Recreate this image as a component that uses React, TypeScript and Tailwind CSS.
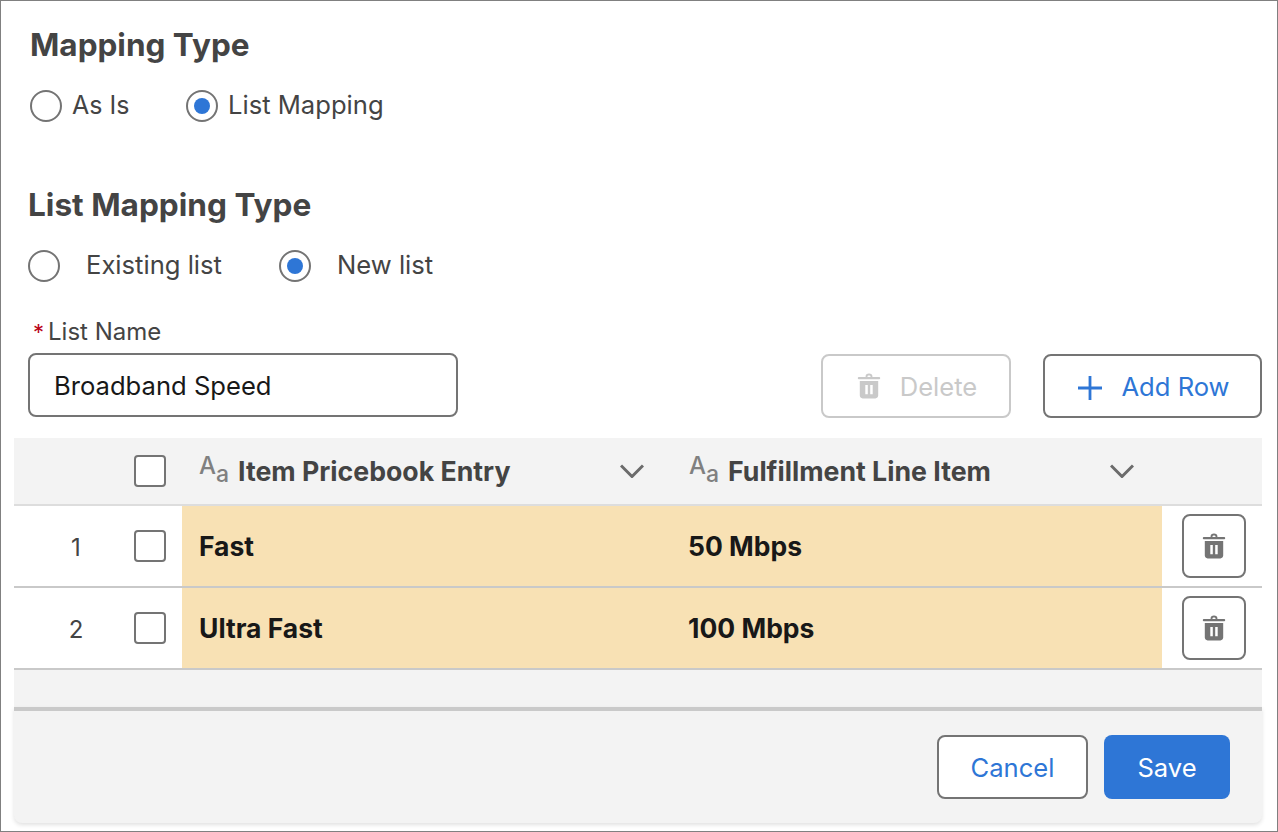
import React from "react";

function Radio({ checked }: { checked?: boolean }) {
  return (
    <span className="flex h-8 w-8 shrink-0 items-center justify-center rounded-full border-2 border-[#747474] bg-white">
      {checked && <span className="h-4 w-4 rounded-full bg-[#2e76d6]" />}
    </span>
  );
}

function Trash({ color, className }: { color: string; className: string }) {
  return (
    <svg viewBox="0 0 24 26" className={className} fill={color}>
      <path d="M8.6 4.2V3.2C8.6 1.6 9.9.6 12 .6s3.4 1 3.4 2.6v1h-1.9v-.9c0-.6-.6-.9-1.5-.9s-1.5.3-1.5.9v.9z" />
      <rect x="0.8" y="4" width="22.4" height="2.2" rx="1" />
      <path fillRule="evenodd" d="M2.8 8h18.4v14.6c0 1.6-1.2 2.8-2.8 2.8H5.6c-1.6 0-2.8-1.2-2.8-2.8zM8.3 12v9.2h2.5V12zM13.2 12v9.2h2.5V12z" />
    </svg>
  );
}

function Chevron() {
  return (
    <svg viewBox="0 0 24 14" className="h-[14px] w-[24px]" fill="none" stroke="#6b6b6b" strokeWidth="3">
      <path d="M1 1.5 12 12.5 23 1.5" />
    </svg>
  );
}

function TextType() {
  return (
    <span className="-ml-px flex w-[39px] shrink-0 items-end leading-none text-[#808080]">
      <span className="mb-[9px] text-[24px] font-medium leading-none">A</span>
      <span className="mb-[1px] text-[23px] font-medium leading-none">a</span>
    </span>
  );
}

function Box() {
  return <span className="block h-8 w-8 rounded-[4px] border-2 border-[#747474] bg-white" />;
}

function Row({ n, a, b }: { n: string; a: string; b: string }) {
  return (
    <div className="flex h-[82px] items-center border-b-2 border-[#c9c9c9]">
      <span className="w-[120px] pl-1 pt-[3px] text-center text-[24px] text-[#444444]">{n}</span>
      <span className="mr-4">
        <Box />
      </span>
      <div className="flex h-full w-[980px] items-center bg-[#f8e1b4] pt-[2px] text-[26.5px] font-bold text-[#181818]">
        <span className="w-[490px] pl-[17px]">{a}</span>
        <span className="pl-[16px]">{b}</span>
      </div>
      <button className="ml-5 flex h-16 w-16 items-center justify-center rounded-lg border-2 border-[#747474] bg-white">
        <Trash color="#747474" className="h-[26px] w-[24px]" />
      </button>
    </div>
  );
}

export default function App() {
  return (
    <div
      className="h-[832px] w-[1278px] overflow-hidden border border-[#808080] bg-white text-[#444444]"
      style={{ fontFamily: "Inter, 'Liberation Sans', sans-serif" }}
    >
      <div className="pl-[29px] pt-[24px]">
        <h2 className="h-10 text-[31.5px] font-bold leading-10">Mapping Type</h2>
      </div>
      <div className="mt-[25px] flex h-8 items-center pl-[29px] text-[25.6px]">
        <Radio />
        <span className="ml-[10px] w-[114px] text-[25px]">As Is</span>
        <Radio checked />
        <span className="ml-[10px] pb-[2px]">List Mapping</span>
      </div>
      <div className="mt-[63px] pl-[27px]">
        <h2 className="h-10 text-[31.6px] font-bold leading-10">List Mapping Type</h2>
      </div>
      <div className="mt-[25px] flex h-8 items-center pl-[27px] text-[25.6px]">
        <Radio />
        <span className="ml-[26px] w-[193px] pb-[2px]">Existing list</span>
        <Radio checked />
        <span className="ml-[26px] pb-[2px]">New list</span>
      </div>
      <div className="mt-[34px] flex h-[32px] items-center pl-[32px] text-[24px]">
        <span className="w-[15px] text-[22px] text-[#ba0517]">*</span>
        <span>List Name</span>
      </div>
      <div className="mt-[5px] flex items-start pl-[27px]">
        <div className="flex h-16 w-[430px] items-center rounded-lg border-2 border-[#747474] pl-[24px] pt-[2px] text-[25.6px] text-[#181818]">
          Broadband Speed
        </div>
        <button className="ml-[363px] mt-px flex h-16 w-[190px] items-center justify-center gap-[19px] rounded-lg border-2 border-[#c9c9c9] pl-[2px] text-[25.6px] text-[#c9c9c9]">
          <Trash color="#c9c9c9" className="h-[26px] w-[24px]" />
          <span className="pt-[2px]">Delete</span>
        </button>
        <button className="ml-8 mt-px flex h-16 w-[219px] items-center justify-center gap-[19px] rounded-lg border-2 border-[#747474] pl-[3px] text-[25.6px] text-[#2e76d6]">
          <svg viewBox="0 0 24 24" className="mt-[3px] h-6 w-6" stroke="#2e76d6" strokeWidth="2.8">
            <path d="M12 0v24M0 12h24" />
          </svg>
          <span className="pt-[2px]">Add Row</span>
        </button>
      </div>

      <div className="ml-[13px] mt-[20px] w-[1248px]">
        <div className="flex h-[68px] items-center border-b-2 border-[#dddddd] bg-[#f3f3f3] text-[26.7px] font-bold">
          <span className="ml-[120px] mr-[34px]">
            <Box />
          </span>
          <div className="flex w-[490px] items-center">
            <TextType />
            <span className="w-[382px]">Item Pricebook Entry</span>
            <Chevron />
          </div>
          <div className="flex w-[490px] items-center">
            <TextType />
            <span className="w-[382px]">Fulfillment Line Item</span>
            <Chevron />
          </div>
        </div>
        <Row n="1" a="Fast" b="50 Mbps" />
        <Row n="2" a="Ultra Fast" b="100 Mbps" />
        <div className="h-[37px] bg-[#f3f3f3]" />
        <div className="flex h-[116px] items-center justify-end rounded-b-lg border-t-4 border-[#c9c9c9] bg-[#f3f3f3] pr-8 shadow-[0_2px_4px_rgba(0,0,0,0.12)]">
          <button className="flex h-16 w-[151px] items-center justify-center rounded-lg border-2 border-[#747474] bg-white pt-[2px] text-[25.6px] text-[#2e76d6]">
            Cancel
          </button>
          <button className="ml-4 flex h-16 w-[126px] items-center justify-center rounded-lg bg-[#2e76d6] pt-[2px] text-[25.6px] text-white">
            Save
          </button>
        </div>
      </div>
    </div>
  );
}
